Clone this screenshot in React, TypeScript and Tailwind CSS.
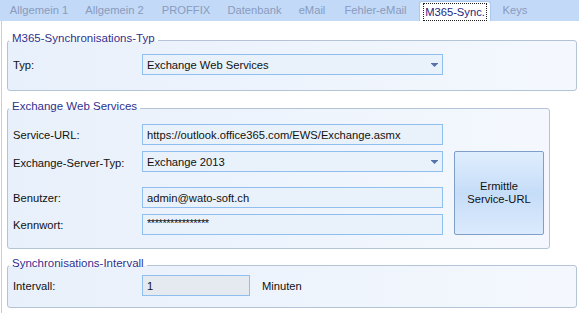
import type { ReactNode } from "react";

const tabs = [
  { label: "Allgemein 1", w: "w-[74px]" },
  { label: "Allgemein 2", w: "w-[77px]" },
  { label: "PROFFIX", w: "w-[66px]" },
  { label: "Datenbank", w: "w-[71px]" },
  { label: "eMail", w: "w-[44px]" },
  { label: "Fehler-eMail", w: "w-[83px]" },
];

function GroupBox({ title, className, children }: { title: string; className: string; children: ReactNode }) {
  return (
    <fieldset
      className={`border border-[#b4c3d5] rounded-[3px] bg-gradient-to-r from-[#e8f0fb] to-[#f4f8fe] px-[5px] ${className}`}
    >
      <legend className="ml-[-4px] px-[3px] pb-[4px] text-[11.5px] leading-[14px] text-[#30308e]">{title}</legend>
      {children}
    </fieldset>
  );
}

function Arrow() {
  return (
    <svg width="7" height="4" viewBox="0 0 7 4" className="shrink-0">
      <rect x="0" y="0" width="7" height="1" fill="#5472a8" />
      <path d="M0.5 1 H6.5 L3.5 4 Z" fill="#5472a8" />
    </svg>
  );
}

function Field({
  children,
  combo,
  width = "w-[301px]",
  bg = "bg-[#e9f1fb]",
}: {
  children: ReactNode;
  combo?: boolean;
  width?: string;
  bg?: string;
}) {
  return (
    <div className={`h-[21px] ${width} ${bg} shrink-0 border border-[#8fbfee] flex items-center pl-[4px] pr-[2px]`}>
      <span className="flex-1 whitespace-nowrap overflow-hidden">{children}</span>
      {combo && (
        <span className="w-[10px] mr-[1px] flex justify-center">
          <Arrow />
        </span>
      )}
    </div>
  );
}

function Label({ children, className = "" }: { children: ReactNode; className?: string }) {
  return <span className={`w-[129px] shrink-0 whitespace-nowrap ${className}`}>{children}</span>;
}

export default function App() {
  return (
    <div
      className="w-[579px] h-[313px] bg-white overflow-hidden text-[11.2px] leading-[14px] text-[#111]"
      style={{ fontFamily: '"Liberation Sans", Arial, sans-serif' }}
    >
      {/* tab strip */}
      <div className="h-[21px] bg-[#c2d9f7] flex items-end pl-[2px]">
        {tabs.map((t) => (
          <div
            key={t.label}
            className={`${t.w} h-[21px] flex items-center justify-center pb-[1px] whitespace-nowrap text-[#8a9bbd]`}
          >
            {t.label}
          </div>
        ))}
        <div className="ml-[2px] w-[72px] h-[20px] bg-white border border-b-0 border-[#a9c9ef] rounded-t-[3px] flex items-stretch px-[3px] pt-[1px]">
          <div className="flex-1 border border-dotted border-[#202020] flex items-center justify-center whitespace-nowrap text-[#1d2780]">
            M365-Sync.
          </div>
        </div>
        <div className="w-[48px] h-[21px] flex items-center justify-center pb-[1px] text-[#8a9bbd]">Keys</div>
      </div>

      {/* page */}
      <div className="ml-[1px] h-[292px] border-l border-[#c6ced9] pl-[5px] pr-[2px] pt-[10px]">
        <GroupBox title="M365-Synchronisations-Typ" className="pb-[15px]">
          <div className="flex items-start mt-[5px]">
            <Label className="mt-[4px]">Typ:</Label>
            <Field combo>Exchange Web Services</Field>
          </div>
        </GroupBox>

        <GroupBox title="Exchange Web Services" className="mt-[8px] w-[542px] pb-[13px]">
          <div className="flex mt-[7px]">
            <div className="flex flex-col">
              <div className="flex items-center h-[21px]">
                <Label>Service-URL:</Label>
                <Field>https://outlook.office365.com/EWS/Exchange.asmx</Field>
              </div>
              <div className="flex items-start h-[21px] mt-[6px]">
                <Label className="mt-[5px]">Exchange-Server-Typ:</Label>
                <Field combo>Exchange 2013</Field>
              </div>
              <div className="flex items-center h-[21px] mt-[15px]">
                <Label>Benutzer:</Label>
                <Field>admin@wato-soft.ch</Field>
              </div>
              <div className="flex items-center h-[21px] mt-[6px]">
                <Label>Kennwort:</Label>
                <Field>
                  <span className="block tracking-[-0.5px] leading-[10px] pb-[3px]">****************</span>
                </Field>
              </div>
            </div>
            <button className="ml-[11px] mt-[27px] w-[90px] h-[84px] border border-[#7f9fc6] rounded-[2px] bg-gradient-to-b from-[#dfeefd] via-[#c6ddf8] to-[#dbeafd] flex flex-col items-center justify-center text-[#111] leading-[13px]">
              <span>Ermittle</span>
              <span>Service-URL</span>
            </button>
          </div>
        </GroupBox>

        <GroupBox title="Synchronisations-Intervall" className="mt-[7px] pb-[11px]">
          <div className="flex items-center mt-[1px]">
            <Label>Intervall:</Label>
            <Field width="w-[108px]" bg="bg-[#e5eaf1]">
              1
            </Field>
            <span className="ml-[12px]">Minuten</span>
          </div>
        </GroupBox>
      </div>
    </div>
  );
}
